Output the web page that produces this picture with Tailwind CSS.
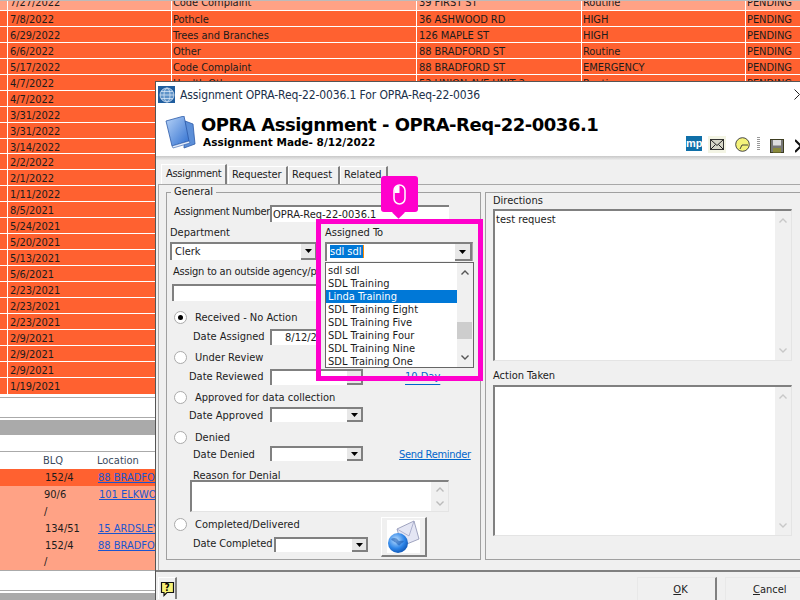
<!DOCTYPE html>
<html>
<head>
<meta charset="utf-8">
<script src="https://cdn.jsdelivr.net/npm/@tailwindcss/browser@4"></script>
</head>
<body class="m-0 bg-white">
<div class="relative w-[800px] h-[600px] overflow-hidden bg-white font-['DejaVu_Sans',sans-serif] font-stretch-condensed text-[11px] leading-[16px] text-[#1c1c1c]">

  <!-- background list -->
  <div class="flex flex-col">
    <div class="h-px bg-[#bbb]"></div>
    <div class="flex flex-col leading-[18px] tracking-[-0.05px]">
    <div class="h-[10px] bg-[#ffa285] border-b border-white grid grid-cols-[8px_164px_245px_165px_164px_54px] content-end overflow-hidden">
      <div class="h-4 border-r border-white"></div><div class="h-4 pl-[2px] border-r border-white">7/27/2022</div><div class="h-4 pl-px border-r border-white">Code Complaint</div><div class="h-4 pl-[2px] border-r border-white">39 FIRST ST</div><div class="h-4 pl-px border-r border-white">Routine</div><div class="h-4 pl-px">PENDING</div>
    </div>
    <div class="h-4 bg-[#ff6130] border-b border-white grid grid-cols-[8px_164px_245px_165px_164px_54px]"><div class="h-[15px] border-r border-white"></div><div class="h-[15px] pl-[2px] border-r border-white">7/8/2022</div><div class="h-[15px] pl-px border-r border-white">Pothcle</div><div class="h-[15px] pl-[2px] border-r border-white">36 ASHWOOD RD</div><div class="h-[15px] pl-px border-r border-white">HIGH</div><div class="pl-px">PENDING</div></div>
    <div class="h-4 bg-[#ff6130] border-b border-white grid grid-cols-[8px_164px_245px_165px_164px_54px]"><div class="h-[15px] border-r border-white"></div><div class="h-[15px] pl-[2px] border-r border-white">6/29/2022</div><div class="h-[15px] pl-px border-r border-white">Trees and Branches</div><div class="h-[15px] pl-[2px] border-r border-white">126 MAPLE ST</div><div class="h-[15px] pl-px border-r border-white">HIGH</div><div class="pl-px">PENDING</div></div>
    <div class="h-4 bg-[#ff6130] border-b border-white grid grid-cols-[8px_164px_245px_165px_164px_54px]"><div class="h-[15px] border-r border-white"></div><div class="h-[15px] pl-[2px] border-r border-white">6/6/2022</div><div class="h-[15px] pl-px border-r border-white">Other</div><div class="h-[15px] pl-[2px] border-r border-white">88 BRADFORD ST</div><div class="h-[15px] pl-px border-r border-white">Routine</div><div class="pl-px">PENDING</div></div>
    <div class="h-4 bg-[#ff6130] border-b border-white grid grid-cols-[8px_164px_245px_165px_164px_54px]"><div class="h-[15px] border-r border-white"></div><div class="h-[15px] pl-[2px] border-r border-white">5/17/2022</div><div class="h-[15px] pl-px border-r border-white">Code Complaint</div><div class="h-[15px] pl-[2px] border-r border-white">88 BRADFORD ST</div><div class="h-[15px] pl-px border-r border-white">EMERGENCY</div><div class="pl-px">PENDING</div></div>
    <div class="h-4 bg-[#ff6130] border-b border-white grid grid-cols-[8px_164px_245px_165px_164px_54px]"><div class="h-[15px] border-r border-white"></div><div class="h-[15px] pl-[2px] border-r border-white">4/7/2022</div><div class="h-[15px] pl-px border-r border-white">Health Other</div><div class="h-[15px] pl-[2px] border-r border-white">52 UNION AVE UNIT 2</div><div class="h-[15px] pl-px border-r border-white">Routine</div><div class="pl-px">PENDING</div></div>
    <div class="h-4 bg-[#ff6130] border-b border-white grid grid-cols-[8px_164px]"><div class="h-[15px] border-r border-white"></div><div class="pl-[2px]">4/7/2022</div></div>
    <div class="h-4 bg-[#ff6130] border-b border-white grid grid-cols-[8px_164px]"><div class="h-[15px] border-r border-white"></div><div class="pl-[2px]">3/31/2022</div></div>
    <div class="h-4 bg-[#ff6130] border-b border-white grid grid-cols-[8px_164px]"><div class="h-[15px] border-r border-white"></div><div class="pl-[2px]">3/31/2022</div></div>
    <div class="h-[15px] bg-[#ff6130] border-b border-white grid grid-cols-[8px_164px] overflow-hidden"><div class="h-[14px] border-r border-white"></div><div class="pl-[2px]">3/14/2022</div></div>
    <div class="h-4 bg-[#ff6130] border-b border-white grid grid-cols-[8px_164px]"><div class="h-[15px] border-r border-white"></div><div class="pl-[2px]">2/2/2022</div></div>
    <div class="h-4 bg-[#ff6130] border-b border-white grid grid-cols-[8px_164px]"><div class="h-[15px] border-r border-white"></div><div class="pl-[2px]">2/1/2022</div></div>
    <div class="h-4 bg-[#ff6130] border-b border-white grid grid-cols-[8px_164px]"><div class="h-[15px] border-r border-white"></div><div class="pl-[2px]">1/11/2022</div></div>
    <div class="h-4 bg-[#ff6130] border-b border-white grid grid-cols-[8px_164px]"><div class="h-[15px] border-r border-white"></div><div class="pl-[2px]">8/5/2021</div></div>
    <div class="h-4 bg-[#ff6130] border-b border-white grid grid-cols-[8px_164px]"><div class="h-[15px] border-r border-white"></div><div class="pl-[2px]">5/24/2021</div></div>
    <div class="h-4 bg-[#ff6130] border-b border-white grid grid-cols-[8px_164px]"><div class="h-[15px] border-r border-white"></div><div class="pl-[2px]">5/20/2021</div></div>
    <div class="h-4 bg-[#ff6130] border-b border-white grid grid-cols-[8px_164px]"><div class="h-[15px] border-r border-white"></div><div class="pl-[2px]">5/13/2021</div></div>
    <div class="h-4 bg-[#ff6130] border-b border-white grid grid-cols-[8px_164px]"><div class="h-[15px] border-r border-white"></div><div class="pl-[2px]">5/6/2021</div></div>
    <div class="h-4 bg-[#ff6130] border-b border-white grid grid-cols-[8px_164px]"><div class="h-[15px] border-r border-white"></div><div class="pl-[2px]">2/23/2021</div></div>
    <div class="h-4 bg-[#ff6130] border-b border-white grid grid-cols-[8px_164px]"><div class="h-[15px] border-r border-white"></div><div class="pl-[2px]">2/23/2021</div></div>
    <div class="h-4 bg-[#ff6130] border-b border-white grid grid-cols-[8px_164px]"><div class="h-[15px] border-r border-white"></div><div class="pl-[2px]">2/23/2021</div></div>
    <div class="h-4 bg-[#ff6130] border-b border-white grid grid-cols-[8px_164px]"><div class="h-[15px] border-r border-white"></div><div class="pl-[2px]">2/9/2021</div></div>
    <div class="h-4 bg-[#ff6130] border-b border-white grid grid-cols-[8px_164px]"><div class="h-[15px] border-r border-white"></div><div class="pl-[2px]">2/9/2021</div></div>
    <div class="h-4 bg-[#ff6130] border-b border-white grid grid-cols-[8px_164px]"><div class="h-[15px] border-r border-white"></div><div class="pl-[2px]">2/9/2021</div></div>
    <div class="h-4 bg-[#ff6130] grid grid-cols-[8px_164px]"><div class="h-4 border-r border-white"></div><div class="pl-[2px]">1/19/2021</div></div>
    </div>

    <div class="h-[3px]"></div>
    <div class="h-px bg-[#aaa]"></div>
    <div class="h-[19px]"></div>
    <div class="h-px bg-[#aaa]"></div>
    <div class="h-[2px]"></div>
    <div class="h-[15px] bg-[#aaa]"></div>
    <div class="h-4"></div>
    <div class="h-px bg-[#aaa]"></div>
    <div class="h-[17px] flex items-center text-[#3a4a60]"><span class="w-[97px] pl-[43px]">BLQ</span><span>Location</span></div>
    <div class="h-[17px] bg-[#ff6130] flex items-center"><span class="w-[98px] pl-[45px]">152/4</span><span class="text-[#1a55d0] underline">88 BRADFORD ST</span></div>
    <div class="h-[17px] bg-[#ffa285] flex items-center"><span class="w-[99px] pl-[44px]">90/6</span><span class="text-[#1a55d0] underline">101 ELKWOOD AVE</span></div>
    <div class="h-[17px] bg-[#ffa285] flex items-center"><span class="w-[99px] pl-[44px]">/</span></div>
    <div class="h-[17px] bg-[#ffa285] flex items-center"><span class="w-[98px] pl-[45px]">134/51</span><span class="text-[#1a55d0] underline">15 ARDSLEY ST</span></div>
    <div class="h-[17px] bg-[#ffa285] flex items-center"><span class="w-[98px] pl-[45px]">152/4</span><span class="text-[#1a55d0] underline">88 BRADFORD ST</span></div>
    <div class="h-[16px] bg-[#ffa285] flex items-center"><span class="w-[99px] pl-[44px]">/</span></div>
    <div class="h-px bg-[#aaa]"></div>
    <div class="h-[19px]"></div>
    <div class="h-px bg-[#aaa]"></div>
    <div class="h-[2px]"></div>
    <div class="h-[7px] bg-[#aaa]"></div>
  </div>

  <!-- dialog window -->
  <div class="absolute left-[155px] top-[81px] w-[650px] h-[519px] bg-[#f0f0f0] border-l border-t border-[#555] flex flex-col">
    <div class="bg-white h-[74px] shrink-0 flex flex-col">
      <div class="h-[22px] flex items-center pl-[2px] pt-[3px]">
        <svg class="w-[17px] h-[17px]" viewBox="0 0 17 17"><rect width="17" height="17" fill="#1f5d9e"/><circle cx="9" cy="9" r="7" fill="#5f93c8" stroke="#d5e5f5" stroke-width=".8"/><ellipse cx="9" cy="9" rx="3" ry="7" fill="none" stroke="#d5e5f5" stroke-width=".8"/><path d="M2 9h14M3 5.5h12M3 12.5h12" stroke="#d5e5f5" stroke-width=".8"/></svg>
        <span class="ml-[5px] text-[12px] tracking-[-0.12px] text-[#20304a]">Assignment OPRA-Req-22-0036.1 For OPRA-Req-22-0036</span>
      </div>
      <div class="flex pl-[9px] pt-[9px]">
        <svg class="w-[31px] h-[33px] mt-[3px] shrink-0" viewBox="0 0 31 33">
          <defs><linearGradient id="bk" x1="0" y1="0" x2="1" y2="1"><stop offset="0" stop-color="#b7d3f7"/><stop offset="1" stop-color="#2f6fd0"/></linearGradient></defs>
          <path d="M20 5l8 3 2 20-11 4z" fill="#5c8fd8" stroke="#2c5ba8" stroke-width=".8"/>
          <path d="M1 5L19 0l5 25-17 5z" fill="url(#bk)" stroke="#2c5ba8" stroke-width=".8"/>
          <path d="M7 30l17-5 1 2-17 5z" fill="#e6eefb" stroke="#2c5ba8" stroke-width=".6"/>
        </svg>
        <div class="ml-[5px] flex flex-col font-stretch-normal">
          <span class="font-bold text-[18px] leading-[24px] tracking-[-0.47px] text-black whitespace-nowrap">OPRA Assignment - OPRA-Req-22-0036.1</span>
          <span class="font-bold text-[10.5px] leading-[12px] pl-[2px] -mt-[1px] text-black whitespace-nowrap">Assignment Made- 8/12/2022</span>
        </div>
      </div>
    </div>
    <div class="h-1 shrink-0 bg-gradient-to-b from-[#c8c8c8] to-[#ececec]"></div>

    <!-- toolbar icons -->
    <div class="absolute left-[530px] top-[54px] flex items-start">
      <div class="w-4 h-[15px] bg-[#0f6fa8] text-white font-['Liberation_Sans',sans-serif] font-bold text-[11px] leading-[15px] overflow-hidden">mp</div>
      <div class="ml-[6px] w-[18px] h-[17px] bg-[#f3f4e4] flex items-center justify-center">
        <svg class="w-[14px] h-[11px]" viewBox="0 0 14 11"><rect x=".5" y=".5" width="13" height="10" fill="#d6d6c8" stroke="#333"/><path d="M.5.5l6.5 6 6.5-6M.5 10.5l5-5M13.5 10.5l-5-5" fill="none" stroke="#222"/></svg>
      </div>
      <svg class="ml-[9px] mt-[1px] w-[15px] h-[15px]" viewBox="0 0 15 15"><circle cx="7.5" cy="7.5" r="6.8" fill="#f4f27a" stroke="#333" stroke-width=".9"/><path d="M7 8h6M7 8l-2 4" stroke="#333" stroke-width=".9" fill="none"/></svg>
      <div class="ml-[7px] mt-[1px] w-[3px] h-[14px] bg-[repeating-linear-gradient(to_bottom,#999_0,#999_1px,transparent_1px,transparent_2px)]"></div>
      <svg class="ml-[10px] mt-[3px] w-[14px] h-[14px]" viewBox="0 0 14 14"><rect x=".5" y=".5" width="13" height="13" fill="#777" stroke="#3d3d20"/><rect x="3" y="1" width="8" height="5.5" fill="#ddd"/><rect x="3" y="9" width="8" height="4.5" fill="#8a8a3a"/></svg>
      <svg class="ml-[11px] mt-[3px] w-[6px] h-[14px] shrink-0" viewBox="0 0 6 14"><path d="M0 1l6 6M0 13l6-6" stroke="#111" stroke-width="2" fill="none"/></svg>
    </div>
    <svg class="absolute left-[638px] top-[7px] w-[6px] h-[11px]" viewBox="0 0 6 11"><path d="M.5.5L5.5 5.5.5 10.5" stroke="#222" fill="none"/></svg>

    <!-- tabs -->
    <div class="h-6 shrink-0 pl-[5px] pt-[4px] flex items-start">
      <div class="w-[66px] h-5 bg-[#f0f0f0] border-t border-l border-white border-r-2 border-r-[#808080] pl-[4px] tracking-[-0.3px] text-[#222] z-10 leading-[18px]">Assignment</div>
      <div class="w-[60px] h-[18px] ml-px mt-[2px] border-t border-l border-white border-r-2 border-r-[#808080] pl-[3px] tracking-[-0.1px]">Requester</div>
      <div class="w-[52px] h-[18px] mt-[2px] border-t border-l border-white border-r-2 border-r-[#808080] pl-[3px]">Request</div>
      <div class="w-[48px] h-[18px] mt-[2px] border-t border-l border-white border-r-2 border-r-[#808080] pl-[3px]">Related</div>
    </div>
    <!-- tab panel -->
    <div class="h-[386px] shrink-0 ml-[2px] border-l border-t border-[#a8a8a8] flex pl-[7px] pt-[7px]">
      <!-- General -->
      <div class="relative w-[315px] h-[368px] border border-[#a0a0a0] shrink-0 flex flex-col">
        <span class="absolute left-[4px] -top-[8px] bg-[#f0f0f0] px-[3px] leading-[14px]">General</span>
        <div class="h-[12px] shrink-0"></div>
        <!-- Assignment number -->
        <div class="flex h-[18px] shrink-0">
          <span class="ml-[7px] w-[96px] leading-[14px] tracking-[-0.3px] whitespace-nowrap">Assignment Number</span>
          <div class="w-[179px] h-[17px] bg-white border-t-2 border-l-2 border-[#808080] pl-px leading-[15px]">OPRA-Req-22-0036.1</div>
        </div>
        <div class="h-[19px] shrink-0 pl-[3px] pt-[2px] leading-[16px]">Department</div>
        <div class="h-[22px] shrink-0 ml-[3px] w-[147px] flex">
          <div class="flex-1 h-[18px] bg-white border-t-2 border-l-2 border-[#808080] pl-[3px] flex">
            <span class="flex-1 leading-[16px]">Clerk</span>
            <div class="w-4 h-4 bg-[#e8e8e8] border-r-2 border-b-2 border-[#808080] flex items-center justify-center"><svg class="w-[7px] h-1" viewBox="0 0 7 4"><path d="M0 0h7L3.5 4z" fill="#000"/></svg></div>
          </div>
        </div>
        <div class="h-[20px] shrink-0 ml-[6px] leading-[16px] tracking-[-0.2px] whitespace-nowrap">Assign to an outside agency/person</div>
        <div class="h-[23px] shrink-0 ml-[5px] w-[144px]"><div class="h-[17px] bg-white border-t-2 border-l-2 border-[#808080]"></div></div>

        <div class="h-[20px] shrink-0 flex items-center">
          <span class="ml-[7px] w-[13px] h-[13px] rounded-full bg-white border border-[#aaa] flex items-center justify-center"><span class="w-[5px] h-[5px] rounded-full bg-black"></span></span>
          <span class="ml-[8px] mt-[2px]">Received - No Action</span>
        </div>
        <div class="h-[20px] shrink-0 flex items-center">
          <span class="w-[103px] pl-[26px]">Date Assigned</span>
          <div class="w-[93px] h-[16px] bg-white border-t-2 border-l-2 border-[#808080] pl-[13px] leading-[14px]">8/12/2022</div>
        </div>
        <div class="h-[20px] shrink-0 flex items-center">
          <span class="ml-[7px] w-[13px] h-[13px] rounded-full bg-white border border-[#aaa]"></span>
          <span class="ml-[8px] mt-[2px]">Under Review</span>
        </div>
        <div class="h-[20px] shrink-0 flex items-center">
          <span class="w-[103px] pl-[22px]">Date Reviewed</span>
          <div class="w-[93px] h-[16px] bg-white border-t-2 border-l-2 border-[#808080] flex justify-end"><div class="w-4 h-[14px] bg-[#e8e8e8] border-r-2 border-b-2 border-[#808080]"></div></div>
          <span class="ml-[42px] text-[#0066cc] underline underline-offset-[4px]">10 Day</span>
        </div>
        <div class="h-[20px] shrink-0 flex items-center">
          <span class="ml-[7px] w-[13px] h-[13px] rounded-full bg-white border border-[#aaa]"></span>
          <span class="ml-[8px] mt-[2px]">Approved for data collection</span>
        </div>
        <div class="h-[20px] shrink-0 flex items-start">
          <span class="w-[103px] pl-[22px] leading-[18px]">Date Approved</span>
          <div class="w-[93px] h-[15px] bg-white border-t-2 border-l-2 border-[#808080] flex justify-end"><div class="w-4 h-[13px] bg-[#e8e8e8] border-r-2 border-b-2 border-[#808080] flex items-center justify-center"><svg class="w-[7px] h-1" viewBox="0 0 7 4"><path d="M0 0h7L3.5 4z" fill="#000"/></svg></div></div>
        </div>
        <div class="h-[20px] shrink-0 flex items-center">
          <span class="ml-[7px] w-[13px] h-[13px] rounded-full bg-white border border-[#aaa]"></span>
          <span class="ml-[8px] mt-[2px]">Denied</span>
        </div>
        <div class="h-[18px] shrink-0 flex items-start">
          <span class="w-[103px] pl-[26px] leading-[16px]">Date Denied</span>
          <div class="w-[93px] h-[15px] -mt-px bg-white border-t-2 border-l-2 border-[#808080] flex justify-end"><div class="w-4 h-[13px] bg-[#e8e8e8] border-r-2 border-b-2 border-[#808080] flex items-center justify-center"><svg class="w-[7px] h-1" viewBox="0 0 7 4"><path d="M0 0h7L3.5 4z" fill="#000"/></svg></div></div>
          <span class="ml-[36px] text-[#0066cc] underline tracking-[-0.3px] whitespace-nowrap">Send Reminder</span>
        </div>
        <div class="h-[15px] shrink-0 pl-[26px] pt-[4px] leading-[14px]">Reason for Denial</div>
        <div class="h-[35px] shrink-0 ml-[23px] w-[259px]">
          <div class="h-[32px] bg-white border-t-2 border-l-2 border-r border-b border-[#808080] border-r-[#e4e4e4] border-b-[#e4e4e4] flex justify-end">
            <div class="w-[17px] bg-[#f0f0f0] flex flex-col items-center justify-between py-[5px]">
              <svg class="w-[8px] h-[5px]" viewBox="0 0 8 5"><path d="M.5 4.5L4 1l3.5 3.5" stroke="#bbb" stroke-width="1.4" fill="none"/></svg>
              <svg class="w-[8px] h-[5px]" viewBox="0 0 8 5"><path d="M.5.5L4 4l3.5-3.5" stroke="#bbb" stroke-width="1.4" fill="none"/></svg>
            </div>
          </div>
        </div>
        <div class="relative shrink-0">
          <div class="h-[18px] flex items-center">
            <span class="ml-[7px] w-[13px] h-[13px] rounded-full bg-white border border-[#aaa]"></span>
            <span class="ml-[8px] mt-[2px]">Completed/Delivered</span>
          </div>
          <div class="h-[20px] flex items-center">
            <span class="w-[107px] pl-[26px] mt-[2px] whitespace-nowrap tracking-[-0.1px]">Date Completed</span>
            <div class="w-[94px] h-[15px] mt-[3px] bg-white border-t-2 border-l-2 border-[#808080] flex justify-end"><div class="w-4 h-[13px] bg-[#e8e8e8] border-r-2 border-b-2 border-[#808080] flex items-center justify-center"><svg class="w-[7px] h-1" viewBox="0 0 7 4"><path d="M0 0h7L3.5 4z" fill="#000"/></svg></div></div>
          </div>
          <!-- email button -->
          <div class="absolute left-[214px] top-[2px] w-[46px] h-[40px] bg-[#f0f0f0] border-t border-l border-white border-r-2 border-b-2 border-r-[#808080] border-b-[#808080] flex items-center justify-center">
            <svg class="w-[33px] h-[33px] bg-white" viewBox="0 0 33 33">
              <defs><radialGradient id="gl" cx=".4" cy=".35" r=".7"><stop offset="0" stop-color="#bfe0ff"/><stop offset=".6" stop-color="#2f86e8"/><stop offset="1" stop-color="#0d52b0"/></radialGradient></defs>
              <path d="M10 9L27 1l5 18-17 7z" fill="#e4e6f4" stroke="#8a8fb0" stroke-width=".8"/>
              <path d="M10 9l12 7 5-15" fill="none" stroke="#a0a5c5" stroke-width=".8"/>
              <circle cx="11" cy="23" r="10" fill="url(#gl)"/>
              <path d="M4 19c3-2 6-1 7 1s4 0 6 1c-1 2-3 2-4 4-1 1-2 0-3-1-1-2-4-2-6-5z" fill="#0d4ea8" opacity=".5"/>
            </svg>
          </div>
        </div>
      </div>
      <!-- Right column -->
      <div class="ml-[4px] w-[330px] h-[368px] border border-[#a0a0a0] pl-[7px] pt-px flex flex-col">
        <div class="h-[14px] shrink-0 leading-[14px]">Directions</div>
        <div class="mt-px shrink-0 w-[299px] h-[152px] bg-white border-t-2 border-l-2 border-r border-b border-[#808080] border-r-[#e4e4e4] border-b-[#e4e4e4] flex justify-end">
          <div class="flex-1 pl-px pt-px">test request</div>
          <div class="w-[16px] bg-[#f0f0f0] flex flex-col items-center justify-between py-[7px]">
            <svg class="w-[8px] h-[5px]" viewBox="0 0 8 5"><path d="M.5 4.5L4 1l3.5 3.5" stroke="#c8c8c8" stroke-width="1.4" fill="none"/></svg>
            <svg class="w-[8px] h-[5px]" viewBox="0 0 8 5"><path d="M.5.5L4 4l3.5-3.5" stroke="#c8c8c8" stroke-width="1.4" fill="none"/></svg>
          </div>
        </div>
        <div class="mt-[6px] shrink-0 h-[18px] leading-[18px]">Action Taken</div>
        <div class="shrink-0 w-[299px] h-[151px] bg-white border-t-2 border-l-2 border-r border-b border-[#808080] border-r-[#e4e4e4] border-b-[#e4e4e4] flex justify-end">
          <div class="w-[16px] bg-[#f0f0f0] flex flex-col items-center justify-between py-[7px]">
            <svg class="w-[8px] h-[5px]" viewBox="0 0 8 5"><path d="M.5 4.5L4 1l3.5 3.5" stroke="#c8c8c8" stroke-width="1.4" fill="none"/></svg>
            <svg class="w-[8px] h-[5px]" viewBox="0 0 8 5"><path d="M.5.5L4 4l3.5-3.5" stroke="#c8c8c8" stroke-width="1.4" fill="none"/></svg>
          </div>
        </div>
      </div>
    </div>
    <!-- footer -->
    <div class="h-[2px] shrink-0 bg-[#808080]"></div>
    <div class="flex flex-1 pt-[5px] overflow-hidden">
      <div class="ml-[2px] w-[24px] h-[22px] border-t border-l border-white border-r-2 border-r-[#808080] flex items-center justify-center">
        <div class="relative w-[15px] h-[16px] flex justify-center">
          <svg class="absolute left-0 top-0 w-[15px] h-[16px]" viewBox="0 0 15 16"><path d="M1.5 1.5h12v10H7l-3 3v-3H1.5z" fill="#f7f278" stroke="#111" stroke-width="1.2"/></svg>
          <span class="relative font-bold text-[10px] leading-[13px] text-black">?</span>
        </div>
      </div>
      <div class="ml-[460px] w-[80px] h-[30px] shrink-0 border-t border-l border-[#e8e8e8] border-r-2 border-r-[#808080] flex justify-center pl-[8px] pt-[4px] text-[#222]"><span><span class="underline">O</span>K</span></div>
      <div class="ml-[8px] w-[80px] h-[30px] shrink-0 border-t border-l border-[#e8e8e8] pl-[27px] pt-[4px] text-[#222]"><span class="underline">C</span>ancel</div>
    </div>
  </div>

  <!-- callout: highlighted field -->
  <div class="absolute left-[316px] top-[219px] w-[167px] h-[162px] border-[5px] border-[#ff00cc]">
    <div class="h-[144px] bg-[#f0f0f0] pl-[4px]">
      <div class="h-[18px] leading-[16px] pt-px">Assigned To</div>
      <div class="w-[148px] h-[19px] bg-white border-t-2 border-l-2 border-[#808080] border-r border-r-[#aaa] flex items-start">
        <span class="ml-[3px] flex-1"><span class="bg-[#0078d7] text-white pr-px inline-block leading-[13px] h-[13px] border-r border-r-[#ff8a00]">sdl sdl</span></span>
        <div class="w-[17px] h-[17px] bg-[#e8e8e8] border-r-2 border-b-2 border-[#808080] flex items-center justify-center"><svg class="w-[7px] h-1" viewBox="0 0 7 4"><path d="M0 0h7L3.5 4z" fill="#000"/></svg></div>
      </div>
      <div class="mt-[1px] w-[149px] h-[106px] bg-white border border-[#666] flex">
        <div class="w-[131px] leading-[13px] pt-px">
          <div class="pl-[2px] h-[13px]">sdl sdl</div>
          <div class="pl-[2px] h-[13px]">SDL Training</div>
          <div class="pl-[2px] h-[13px] bg-[#0078d7] text-white">Linda Training</div>
          <div class="pl-[2px] h-[13px]">SDL Training Eight</div>
          <div class="pl-[2px] h-[13px]">SDL Training Five</div>
          <div class="pl-[2px] h-[13px]">SDL Training Four</div>
          <div class="pl-[2px] h-[13px]">SDL Training Nine</div>
          <div class="pl-[2px] h-[13px]">SDL Training One</div>
        </div>
        <div class="flex-1 bg-[#f0f0f0] relative flex flex-col items-center justify-between py-[7px]">
          <svg class="w-[8px] h-[5px]" viewBox="0 0 8 5"><path d="M.5 4.5L4 1l3.5 3.5" stroke="#555" stroke-width="1.4" fill="none"/></svg>
          <div class="absolute left-0 top-[59px] w-[15px] h-[17px] bg-[#cdcdcd]"></div>
          <svg class="w-[8px] h-[5px]" viewBox="0 0 8 5"><path d="M.5.5L4 4l3.5-3.5" stroke="#555" stroke-width="1.4" fill="none"/></svg>
        </div>
      </div>
    </div>
  </div>

  <!-- mouse badge -->
  <div class="absolute left-[381px] top-[176px] w-[37px] h-[36px] rounded-[3px] bg-[#ff00cc] flex items-center justify-center">
    <svg class="w-[13px] h-[21px]" viewBox="0 0 13 21"><rect x="1" y="1" width="11" height="19" rx="5.5" fill="#ff00cc" stroke="#fff" stroke-width="1.5"/><path d="M6.5 1.5A5 5 0 0 0 1.5 6.5V9h5z" fill="#fff"/></svg>
  </div>
  <div class="absolute left-[394px] top-[208px] w-[9px] h-[9px] rotate-45 bg-[#ff00cc]"></div>
</div>
</body>
</html>
